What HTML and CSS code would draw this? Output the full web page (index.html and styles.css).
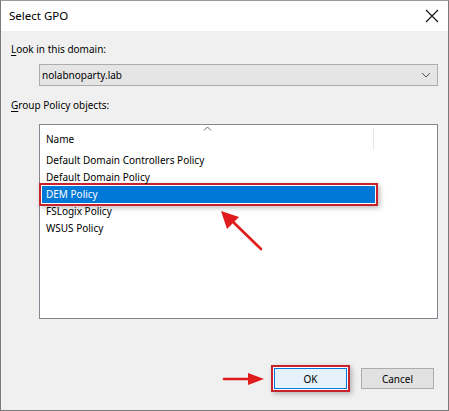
FILE: index.html
```html
<!DOCTYPE html>
<html>
<head>
<meta charset="utf-8">
<link rel="stylesheet" href="styles.css">
</head>
<body>
<div class="window">
  <div class="titlebar">
    <span class="title">Select GPO</span>
    <svg class="close" width="14" height="14" viewBox="0 0 14 14"><path d="M1 1 L13 13 M13 1 L1 13" stroke="#111" stroke-width="1.1" fill="none"/></svg>
  </div>
  <div class="content">
    <div class="label label-domain"><u>L</u>ook in this domain:</div>
    <div class="combo">
      <span class="combo-text">nolabnoparty.lab</span>
      <svg class="chev" width="10" height="6" viewBox="0 0 10 6"><path d="M1 1 L5 5 L9 1" stroke="#555" stroke-width="1" fill="none"/></svg>
    </div>
    <div class="label label-gpo"><u>G</u>roup Policy objects:</div>
    <div class="listbox">
      <div class="header">
        <span class="col-name">Name</span>
        <svg class="sort" width="9" height="5" viewBox="0 0 9 5"><path d="M1 4.5 L4.5 1 L8 4.5" stroke="#666" stroke-width="1" fill="none"/></svg>
        <span class="col-sep"></span>
      </div>
      <div class="row">Default Domain Controllers Policy</div>
      <div class="row">Default Domain Policy</div>
      <div class="row selected">DEM Policy</div>
      <div class="row">FSLogix Policy</div>
      <div class="row">WSUS Policy</div>
    </div>
    <div class="footer">
      <button class="btn btn-ok">OK</button>
      <button class="btn btn-cancel">Cancel</button>
    </div>
  </div>
  <svg class="arrow arrow-list" width="50" height="46" viewBox="0 0 50 46">
    <line x1="43" y1="40" x2="12" y2="10" stroke="#e01b1b" stroke-width="2.6" stroke-linecap="round"/>
    <polygon points="3,2 21,8 9,20" fill="#e01b1b"/>
  </svg>
  <svg class="arrow arrow-ok" width="46" height="14" viewBox="0 0 46 14">
    <line x1="2" y1="7" x2="30" y2="7" stroke="#e01b1b" stroke-width="2.6" stroke-linecap="round"/>
    <polygon points="26,1 42,7 26,13" fill="#e01b1b"/>
  </svg>
</div>
</body>
</html>
```

FILE: styles.css
```css
html, body {
  margin: 0;
  padding: 0;
  background: #ffffff;
}
body {
  font-family: "Noto Sans", "Open Sans", sans-serif;
  font-size: 10px;
  color: #000;
}
.window {
  position: relative;
  width: 449px;
  height: 411px;
  box-sizing: border-box;
  border: 1px solid #7a7a7a;
  border-top-color: #9a9a9a;
  background: #f0f0f0;
  overflow: hidden;
}
.titlebar {
  height: 30px;
  background: #ffffff;
  display: flex;
  align-items: center;
  justify-content: space-between;
  padding: 0 8px 0 8px;
}
.title {
  font-size: 11.5px;
  line-height: 16px;
  margin-top: -1px;
}
.close {
  margin-right: 1px;
}
.content {
  padding: 0 10px 0 10px;
}
.label {
  line-height: 16px;
}
.label u {
  text-decoration: underline;
  text-underline-offset: 2px;
}
.label-domain {
  margin-top: 10px;
}
.combo {
  margin: 7px 0 0 28px;
  height: 22px;
  box-sizing: border-box;
  border: 1px solid #adadad;
  background: #e5e5e5;
  display: flex;
  align-items: center;
  justify-content: space-between;
  padding: 0 6px 0 2px;
}
.combo-text {
  line-height: 16px;
}
.label-gpo {
  margin-top: 11px;
}
.listbox {
  position: relative;
  margin: 11px 0 0 28px;
  height: 195px;
  box-sizing: border-box;
  border: 1px solid #828790;
  background: #ffffff;
}
.header {
  position: relative;
  height: 27px;
  display: flex;
  align-items: center;
  padding-left: 6px;
}
.col-name {
  line-height: 16px;
  margin-top: 0;
}
.sort {
  position: absolute;
  left: 163px;
  top: 1px;
}
.col-sep {
  position: absolute;
  left: 333px;
  top: 3px;
  width: 1px;
  height: 22px;
  background: #e5e5e5;
}
.row {
  height: 17px;
  line-height: 17px;
  padding-left: 4px;
  margin: 0 2px;
  white-space: nowrap;
}
.row.selected {
  background: #0078d7;
  color: #ffffff;
  width: 329px;
  margin-left: 2px;
  padding-left: 4px;
  box-shadow: 0 0 0 1px #ffffff, 0 0 0 3px #c8232c, 2px 2px 5px 3px rgba(0,0,0,0.25);
}
.footer {
  display: flex;
  justify-content: flex-end;
  gap: 14px;
  margin-top: 49px;
  padding-right: 4px;
}
.btn {
  font-family: inherit;
  font-size: 10px;
  height: 21px;
  width: 73px;
  box-sizing: border-box;
  padding: 0;
  margin: 0;
  line-height: 16px;
  color: #000;
}
.btn-ok {
  background: #e5f1fb;
  border: 1px solid #0078d7;
  box-shadow: 0 0 0 1px #ffffff, 0 0 0 3px #c8232c, 2px 2px 5px 3px rgba(0,0,0,0.25);
}
.btn-cancel {
  background: #e1e1e1;
  border: 1px solid #adadad;
}
.arrow {
  position: absolute;
}
.arrow-list {
  left: 217px;
  top: 208px;
}
.arrow-ok {
  left: 221px;
  top: 371px;
}
```
